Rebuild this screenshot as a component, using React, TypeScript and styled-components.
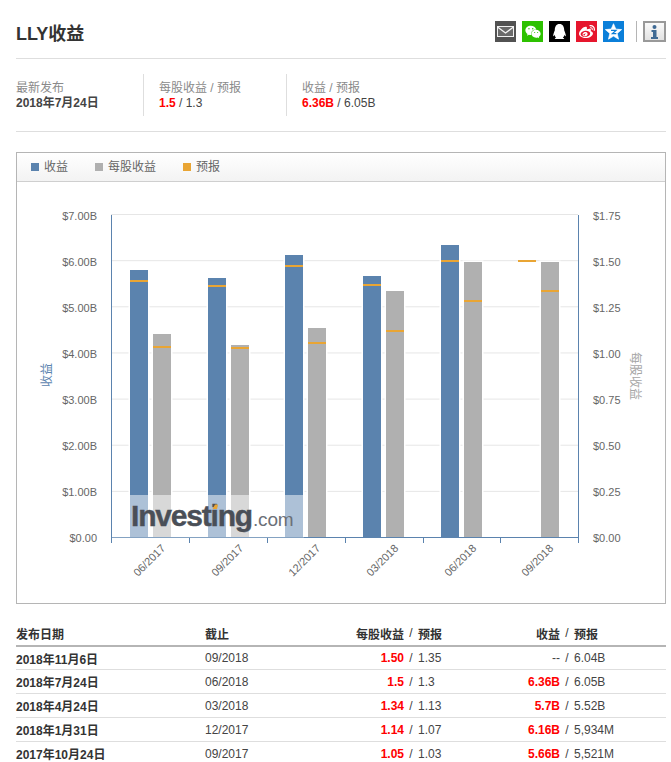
import React from 'react';
import styled, { createGlobalStyle } from 'styled-components';
import { FaWeibo, FaWeixin, FaQq } from 'react-icons/fa';

const BLUE = '#5b83ae';
const GRAY = '#b0b0b0';
const ORANGE = '#e9a534';
const RED = '#ff0000';

const GlobalStyle = createGlobalStyle`
  html, body {
    margin: 0;
    padding: 0;
    background: #fff;
    font-family: 'Liberation Sans', 'Noto Sans CJK SC', Arial, sans-serif;
    color: #333;
  }
`;

const Page = styled.div`
  width: 671px;
  height: 762px;
  overflow: hidden;
  padding: 0 5px 0 16px;
  box-sizing: border-box;
`;

const Header = styled.header`
  height: 52px;
  display: flex;
  align-items: center;
  justify-content: space-between;
  border-bottom: 1px solid #dedede;
  padding-top: 6px;
`;

const Title = styled.h1`
  margin: 0;
  font-size: 18px;
  font-weight: bold;
  color: #333;
`;

const Tools = styled.div`
  display: flex;
  align-items: center;
  margin-top: -1px;
`;

const Social = styled.a<{ $bg: string }>`
  width: 21px;
  height: 21px;
  margin-right: 6px;
  background: ${(p) => p.$bg};
  color: #fff;
  display: flex;
  align-items: center;
  justify-content: center;
`;

const ToolDivider = styled.span`
  width: 1px;
  height: 21px;
  background: #b5b5b5;
  margin: 0 6px;
`;

const InfoButton = styled.button`
  width: 23px;
  height: 21px;
  padding: 0;
  border: 2px solid #999;
  background: linear-gradient(#fafafa, #e2e2e2);
  display: flex;
  align-items: center;
  justify-content: center;
`;

const Stats = styled.section`
  display: flex;
  height: 73px;
  padding-top: 15px;
  box-sizing: border-box;
  border-bottom: 1px solid #dedede;
`;

const Stat = styled.div<{ $first?: boolean }>`
  height: 42px;
  width: ${(p) => (p.$first ? '127px' : '143px')};
  padding-left: ${(p) => (p.$first ? '0' : '15px')};
  padding-top: 7px;
  box-sizing: border-box;
  border-left: ${(p) => (p.$first ? 'none' : '1px solid #dedede')};
  font-size: 12px;
  line-height: 15px;
`;

const StatLabel = styled.div`
  color: #8a8a8a;
  font-size: 12px;
  line-height: 15px;
`;

const StatValue = styled.div<{ $bold?: boolean }>`
  font-weight: ${(p) => (p.$bold ? 'bold' : 'normal')};
  color: #444;
  line-height: 15px;
`;

const Red = styled.b`
  color: ${RED};
`;

const ChartBox = styled.section`
  margin-top: 20px;
  width: 650px;
  height: 452px;
  box-sizing: border-box;
  border: 1px solid #b5b5b5;
`;

const Legend = styled.div`
  height: 29px;
  display: flex;
  align-items: center;
  padding-left: 14px;
  box-sizing: border-box;
  background: linear-gradient(#ffffff, #f3f3f3);
  border-bottom: 1px solid #cfcfcf;
  font-size: 12px;
  color: #666;
`;

const LegendItem = styled.span`
  display: flex;
  align-items: center;
  gap: 5px;
  margin-right: 27px;
`;

const LegendLabel = styled.span`
  padding-bottom: 3px;
`;

const Swatch = styled.i<{ $color: string }>`
  width: 8px;
  height: 8px;
  background: ${(p) => p.$color};
`;

const ChartSvg = styled.svg`
  display: block;
  width: 648px;
  height: 421px;
  font-family: 'Liberation Sans', 'Noto Sans CJK SC', Arial, sans-serif;
`;

const Table = styled.section`
  margin-top: 19px;
  width: 650px;
  font-size: 12px;
`;

const Row = styled.div<{ $head?: boolean }>`
  display: grid;
  grid-template-columns: 189px 115px 84px 14px 82px 60px 14px 1fr;
  align-items: center;
  height: 23px;
  border-bottom: ${(p) => (p.$head ? '2px solid #b5b5b5' : '1px solid #dedede')};
  font-weight: ${(p) => (p.$head ? 'bold' : 'normal')};
  color: ${(p) => (p.$head ? '#333' : '#444')};
  &:first-child {
    height: 20px;
    padding-bottom: 2px;
  }
  &:nth-child(2) {
    height: 22px;
  }
`;

const DateCell = styled.b`
  color: #333;
`;

const Actual = styled.span<{ $red?: boolean }>`
  text-align: right;
  font-weight: ${(p) => (p.$red ? 'bold' : 'inherit')};
  color: ${(p) => (p.$red ? RED : 'inherit')};
`;

const Slash = styled.span`
  text-align: center;
  font-weight: normal;
`;

const BASE = 537.5;
const STEP = 46.14;

const yTicksLeft = ['$0.00', '$1.00B', '$2.00B', '$3.00B', '$4.00B', '$5.00B', '$6.00B', '$7.00B'];
const yTicksRight = ['$0.00', '$0.25', '$0.50', '$0.75', '$1.00', '$1.25', '$1.50', '$1.75'];
const xTicks = [111, 189, 267, 345, 423, 500, 578];

const groups = [
  { label: '06/2017', blueX: 130, grayX: 153, blue: 270, gray: 334, bf: 280, gf: 346 },
  { label: '09/2017', blueX: 208, grayX: 231, blue: 278, gray: 345, bf: 285, gf: 347 },
  { label: '12/2017', blueX: 285, grayX: 308, blue: 255, gray: 328, bf: 265, gf: 342 },
  { label: '03/2018', blueX: 363, grayX: 386, blue: 276, gray: 291, bf: 284, gf: 330 },
  { label: '06/2018', blueX: 441, grayX: 464, blue: 245, gray: 262, bf: 260, gf: 300 },
  { label: '09/2018', blueX: 518, grayX: 541, blue: 0, gray: 262, bf: 260, gf: 290 },
];

const rows = [
  ['2018年11月6日', '09/2018', '1.50', '1.35', '--', '6.04B'],
  ['2018年7月24日', '06/2018', '1.5', '1.3', '6.36B', '6.05B'],
  ['2018年4月24日', '03/2018', '1.34', '1.13', '5.7B', '5.52B'],
  ['2018年1月31日', '12/2017', '1.14', '1.07', '6.16B', '5,934M'],
  ['2017年10月24日', '09/2017', '1.05', '1.03', '5.66B', '5,521M'],
];

const Chart = () => (
  <ChartSvg viewBox="17 182 648 421">
    {yTicksLeft.map((t, i) => {
      const y = BASE - i * STEP;
      const labelY = 542 - i * 46;
      return (
        <g key={t}>
          {i > 0 && <line x1={111} x2={578} y1={y} y2={y} stroke="#e6e6e6" />}
          <text x={97} y={labelY} textAnchor="end" fontSize={11} fill="#666">{t}</text>
          <text x={593} y={labelY} fontSize={11} fill="#666">{yTicksRight[i]}</text>
        </g>
      );
    })}
    {groups.map((g) => (
      <g key={g.label}>
        {g.blue > 0 && (
          <rect x={g.blueX} y={g.blue} width={18} height={BASE - g.blue} fill={BLUE} stroke="#fff" strokeWidth={3} paintOrder="stroke" />
        )}
        <rect x={g.grayX} y={g.gray} width={18} height={BASE - g.gray} fill={GRAY} stroke="#fff" strokeWidth={3} paintOrder="stroke" />
        <rect x={g.blueX} y={g.bf} width={18} height={2} fill={ORANGE} />
        <rect x={g.grayX} y={g.gf} width={18} height={2} fill={ORANGE} />
        <text
          x={g.blueX + 36}
          y={549}
          textAnchor="end"
          fontSize={11}
          fill="#666"
          transform={`rotate(-45 ${g.blueX + 36} 549)`}
        >
          {g.label}
        </text>
      </g>
    ))}
    <line x1={111.5} x2={111.5} y1={215} y2={BASE} stroke={BLUE} />
    <line x1={578.5} x2={578.5} y1={215} y2={BASE} stroke={BLUE} />
    <line x1={111} x2={579} y1={BASE} y2={BASE} stroke={BLUE} />
    {xTicks.map((x) => (
      <line key={x} x1={x + 0.5} x2={x + 0.5} y1={BASE} y2={543} stroke={BLUE} />
    ))}
    <text x={51} y={375} textAnchor="middle" fontSize={12} fill={BLUE} transform="rotate(-90 51 375)">收益</text>
    <text x={631} y={376} textAnchor="middle" fontSize={12} fill="#a6a6a6" transform="rotate(90 631 376)">每股收益</text>
    {/* watermark washes out whatever sits under it */}
    <rect x={112} y={495} width={192} height={42.5} fill="#fff" opacity={0.5} />
    <text x={131} y={526} fontSize={30} fontWeight="bold" fill="#4a4f57" stroke="#4a4f57" strokeWidth={0.4} letterSpacing={-1.2}>Investing</text>
    <text x={253} y={526} fontSize={19} fill="#6b7078" letterSpacing={-0.2}>.com</text>
    <path d="M212.5 509l2.5-4.5h3l-1 4.5z" fill={ORANGE} />
  </ChartSvg>
);

export default function App() {
  return (
    <Page>
      <GlobalStyle />
      <Header>
        <Title>LLY收益</Title>
        <Tools>
          <Social $bg="#525252">
            <svg width="17" height="11" viewBox="0 0 17 11">
              <rect x="0.5" y="0.5" width="16" height="10" fill="#6a6a6a" stroke="#f0f0f0" />
              <path d="M0.5 1 L8.5 7 L16.5 1" fill="none" stroke="#f5f5f5" strokeWidth="1.3" />
            </svg>
          </Social>
          <Social $bg="#2dc100"><FaWeixin size={16} /></Social>
          <Social $bg="#000"><FaQq size={15} /></Social>
          <Social $bg="#e6162d"><FaWeibo size={16} /></Social>
          <Social $bg="#0b7fd9">
            <svg width="17" height="17" viewBox="0 0 24 24">
              <path d="M12 1l3.2 7.6 8.3.7-6.3 5.4 1.9 8.1L12 18.5l-7.1 4.3 1.9-8.1L.5 9.3l8.3-.7z" fill="#fff" stroke="#fff" strokeLinejoin="round" />
              <path d="M8.5 10.5h7l-5 4.5h5.5" fill="none" stroke="#0b7fd9" strokeWidth="1.8" />
            </svg>
          </Social>
          <ToolDivider />
          <InfoButton aria-label="info">
            <svg width="9" height="14" viewBox="0 0 9 14">
              <circle cx="4.5" cy="2" r="2" fill="#3f6a94" />
              <path d="M1.5 5h5v7h1.5v2H1v-2h2V7H1.5z" fill="#3f6a94" />
            </svg>
          </InfoButton>
        </Tools>
      </Header>
      <Stats>
        <Stat $first>
          <StatLabel>最新发布</StatLabel>
          <StatValue $bold>2018年7月24日</StatValue>
        </Stat>
        <Stat>
          <StatLabel>每股收益 / 预报</StatLabel>
          <StatValue><Red>1.5</Red> / 1.3</StatValue>
        </Stat>
        <Stat>
          <StatLabel>收益 / 预报</StatLabel>
          <StatValue><Red>6.36B</Red> / 6.05B</StatValue>
        </Stat>
      </Stats>
      <ChartBox>
        <Legend>
          <LegendItem><Swatch $color={BLUE} /><LegendLabel>收益</LegendLabel></LegendItem>
          <LegendItem><Swatch $color={GRAY} /><LegendLabel>每股收益</LegendLabel></LegendItem>
          <LegendItem><Swatch $color={ORANGE} /><LegendLabel>预报</LegendLabel></LegendItem>
        </Legend>
        <Chart />
      </ChartBox>
      <Table>
        <Row $head>
          <span>发布日期</span>
          <span>截止</span>
          <Actual>每股收益</Actual>
          <Slash>/</Slash>
          <span>预报</span>
          <Actual>收益</Actual>
          <Slash>/</Slash>
          <span>预报</span>
        </Row>
        {rows.map((r) => (
          <Row key={r[0]}>
            <DateCell>{r[0]}</DateCell>
            <span>{r[1]}</span>
            <Actual $red>{r[2]}</Actual>
            <Slash>/</Slash>
            <span>{r[3]}</span>
            <Actual $red={r[4] !== '--'}>{r[4]}</Actual>
            <Slash>/</Slash>
            <span>{r[5]}</span>
          </Row>
        ))}
      </Table>
    </Page>
  );
}
